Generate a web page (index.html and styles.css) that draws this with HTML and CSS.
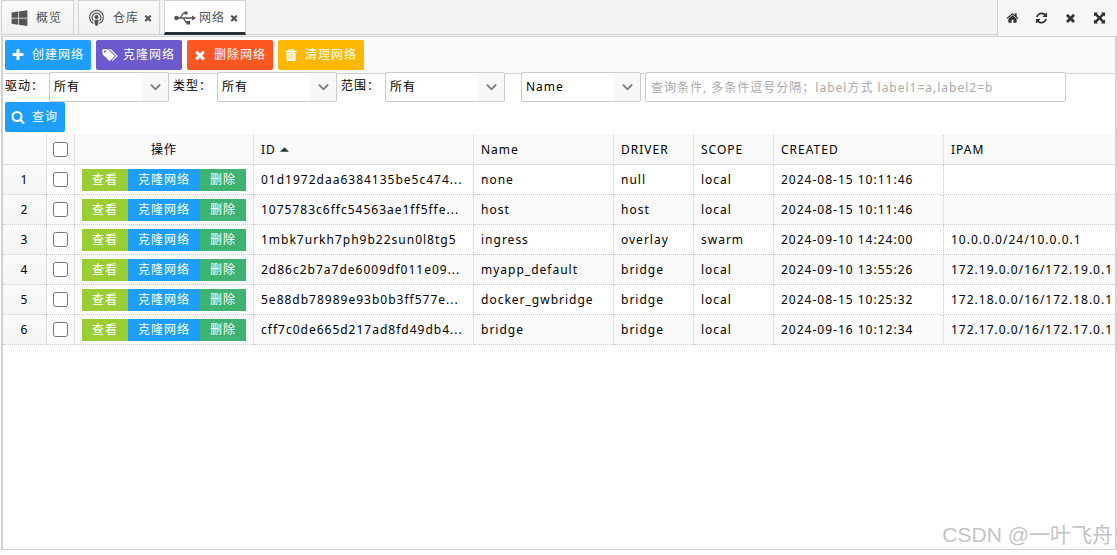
FILE: index.html
```html
<!DOCTYPE html>
<html lang="zh-CN">
<head>
<meta charset="utf-8">
<title>网络</title>
<link rel="stylesheet" href="styles.css">
</head>
<body>
<svg class="defs" aria-hidden="true">
  <symbol id="i-plus" viewBox="0 0 1792 1792"><path d="M1600 736v192q0 40-28 68t-68 28h-416v416q0 40-28 68t-68 28h-192q-40 0-68-28t-28-68v-416h-416q-40 0-68-28t-28-68v-192q0-40 28-68t68-28h416v-416q0-40 28-68t68-28h192q40 0 68 28t28 68v416h416q40 0 68 28t28 68z"/></symbol>
  <symbol id="i-times" viewBox="0 0 1792 1792"><path d="M1490 1322q0 40-28 68l-136 136q-28 28-68 28t-68-28l-294-294-294 294q-28 28-68 28t-68-28l-136-136q-28-28-28-68t28-68l294-294-294-294q-28-28-28-68t28-68l136-136q28-28 68-28t68 28l294 294 294-294q28-28 68-28t68 28l136 136q28 28 28 68t-28 68l-294 294 294 294q28 28 28 68z"/></symbol>
  <symbol id="i-search" viewBox="0 0 1792 1792"><path d="M1216 832q0-185-131.500-316.500t-316.500-131.500-316.500 131.500-131.500 316.500 131.500 316.500 316.500 131.500 316.500-131.500 131.500-316.500zm512 832q0 52-38 90t-90 38q-54 0-90-38l-343-342q-179 124-399 124-143 0-273.500-55.500t-225-150-150-225-55.500-273.500 55.500-273.500 150-225 225-150 273.500-55.500 273.500 55.500 225 150 150 225 55.500 273.500q0 220-124 399l343 343q37 37 37 90z"/></symbol>
  <symbol id="i-home" viewBox="0 0 1792 1792"><path d="M1472 992v480q0 26-19 45t-45 19h-384v-384h-256v384h-384q-26 0-45-19t-19-45v-480q0-1 .5-3t.5-3l575-474 575 474q1 2 1 6zm223-69l-62 74q-8 9-21 11h-3q-13 0-21-7l-692-577-692 577q-12 8-24 7-13-2-21-11l-62-74q-8-10-7-23.500t11-21.500l719-599q32-26 76-26t76 26l244 204v-195q0-14 9-23t23-9h192q14 0 23 9t9 23v408l219 182q10 8 11 21.500t-7 23.500z"/></symbol>
  <symbol id="i-refresh" viewBox="0 0 1792 1792"><path d="M1639 1056q0 5-1 7-64 268-268 434.500t-478 166.500q-146 0-282.500-55t-243.500-157l-129 129q-19 19-45 19t-45-19-19-45v-448q0-26 19-45t45-19h448q26 0 45 19t19 45-19 45l-137 137q71 66 161 102t187 36q134 0 250-65t186-179q11-17 53-117 8-23 30-23h192q13 0 22.500 9.500t9.500 22.500zm25-800v448q0 26-19 45t-45 19h-448q-26 0-45-19t-19-45 19-45l138-138q-148-137-349-137-134 0-250 65t-186 179q-11 17-53 117-8 23-30 23h-199q-13 0-22.500-9.500t-9.500-22.500v-7q65-268 270-434.500t480-166.500q146 0 284 55.500t245 156.500l130-129q19-19 45-19t45 19 19 45z"/></symbol>
  <symbol id="i-windows" viewBox="0 0 1792 1792"><path d="M746 1006v651l-682-94v-557h682zm0-743v659h-682v-565zm982 743v786l-907-125v-661h907zm0-878v794h-907v-669z"/></symbol>
  <symbol id="i-tags" viewBox="0 0 1920 1792"><path d="M448 448q0-53-37.500-90.500t-90.500-37.500-90.500 37.500-37.500 90.500 37.500 90.500 90.500 37.500 90.500-37.500 37.500-90.500zm1067 576q0 53-37 90l-491 492q-39 37-91 37-53 0-90-37l-715-716q-38-37-64.500-101t-26.500-117v-416q0-52 38-90t90-38h416q53 0 117 26.500t102 64.500l715 714q37 39 37 91zm384 0q0 53-37 90l-491 492q-39 37-91 37-36 0-59-14t-53-45l470-470q37-37 37-90 0-52-37-91l-715-714q-38-38-102-64.500t-117-26.500h224q53 0 117 26.500t102 64.500l715 714q37 39 37 91z"/></symbol>
  <symbol id="i-trash" viewBox="0 0 14 14"><path fill-rule="evenodd" d="M5 1h4l1 1.500h2.500v1.500h-11V2.500H4zM5.600 1.800L5.200 2.500h3.600l-.4-.7zM2.500 4.500h9v7.200q0 1.300-1.200 1.300H3.700Q2.500 13 2.500 11.700zM4.700 6v5.500h.6V6zM6.700 6v5.500h.6V6zM8.700 6v5.500h.6V6z"/></symbol>
  <symbol id="i-expand" viewBox="0 0 14 14"><path d="M1 1h4.500L4.200 2.300 7 5.100 9.800 2.300 8.500 1H13v4.500l-1.300-1.300L8.900 7l2.800 2.800L13 8.500V13H8.500l1.300-1.300L7 8.900l-2.800 2.800L5.500 13H1V8.500l1.300 1.300L5.100 7 2.300 4.200 1 5.500z"/></symbol>
  <symbol id="i-podcast" viewBox="0 0 18 18"><g fill="none" stroke="currentColor" stroke-width="1.300"><path d="M5.800 15.300A7.300 7.300 0 1 1 12.200 15.300"/><path d="M5.700 12.300A4.700 4.700 0 1 1 12.300 12.300" /></g><circle cx="9" cy="8.500" r="2.200"/><path d="M6.800 12q0-1 2.200-1t2.200 1q0 2.500-.8 5-.2 1-1.400 1t-1.400-1q-.8-2.500-.8-5z"/></symbol>
  <symbol id="i-usb" viewBox="0 0 22 14"><circle cx="2.500" cy="7" r="2.300"/><circle cx="12" cy="2" r="1.800"/><path d="M12.500 10h3.600v3.600h-3.600zM18 4.400L22 7l-4 2.600z"/><path fill="none" stroke="currentColor" stroke-width="1.300" d="M3 7h16M5.500 7C8 7 7.500 2 10 2h2M8.500 7c2.500 0 2 4.700 4.500 4.700"/></symbol>
  <symbol id="i-down" viewBox="0 0 12 8"><path fill="none" stroke="currentColor" stroke-width="2" d="M1 1.500l5 5 5-5"/></symbol>
  <symbol id="i-up" viewBox="0 0 8 4"><path d="M0 4l4-4 4 4z"/></symbol>
</svg>

<header class="topbar">
  <nav class="tabs">
    <div class="tab first"><svg class="icon tab-icon"><use href="#i-windows"/></svg><a class="tab-link" href="#overview">概览</a></div>
    <div class="tab"><svg class="icon tab-icon"><use href="#i-podcast"/></svg><a class="tab-link" href="#registry">仓库</a><button class="close" type="button" aria-label="关闭仓库"><svg class="icon close-icon"><use href="#i-times"/></svg></button></div>
    <div class="tab active"><svg class="icon usb-icon"><use href="#i-usb"/></svg><a class="tab-link" href="#network">网络</a><button class="close" type="button" aria-label="关闭网络"><svg class="icon close-icon"><use href="#i-times"/></svg></button></div>
  </nav>
  <div class="tools">
    <button class="tool" type="button" aria-label="首页"><svg class="icon"><use href="#i-home"/></svg></button>
    <button class="tool" type="button" aria-label="刷新"><svg class="icon"><use href="#i-refresh"/></svg></button>
    <button class="tool" type="button" aria-label="关闭"><svg class="icon"><use href="#i-times"/></svg></button>
    <button class="tool" type="button" aria-label="全屏"><svg class="icon"><use href="#i-expand"/></svg></button>
  </div>
</header>

<main class="panel">
  <div class="toolbar">
    <button class="btn blue" type="button"><svg class="icon"><use href="#i-plus"/></svg>创建网络</button>
    <button class="btn purple" type="button"><svg class="icon tags-icon"><use href="#i-tags"/></svg>克隆网络</button>
    <button class="btn red" type="button"><svg class="icon"><use href="#i-times"/></svg>删除网络</button>
    <button class="btn amber" type="button"><svg class="icon"><use href="#i-trash"/></svg>清理网络</button>
  </div>

  <form class="filters">
    <div class="field"><label class="label" for="driver">驱动：</label><span class="combo"><select class="select" id="driver"><option>所有</option></select><svg class="arrow"><use href="#i-down"/></svg></span></div>
    <div class="field"><label class="label" for="type">类型：</label><span class="combo"><select class="select" id="type"><option>所有</option></select><svg class="arrow"><use href="#i-down"/></svg></span></div>
    <div class="field"><label class="label" for="scope">范围：</label><span class="combo"><select class="select" id="scope"><option>所有</option></select><svg class="arrow"><use href="#i-down"/></svg></span></div>
    <span class="combo key"><select class="select" aria-label="查询字段"><option>Name</option></select><svg class="arrow"><use href="#i-down"/></svg></span>
    <input class="query" type="text" aria-label="查询条件" placeholder="查询条件, 多条件逗号分隔；label方式 label1=a,label2=b">
    <button class="btn blue" type="button"><svg class="icon"><use href="#i-search"/></svg>查询</button>
  </form>

  <table class="grid">
    <colgroup><col class="c-num"><col class="c-check"><col class="c-ops"><col class="c-id"><col class="c-name"><col class="c-short"><col class="c-short"><col class="c-date"><col></colgroup>
    <thead>
      <tr><th></th><th class="check"><input class="box" type="checkbox" aria-label="全选"></th><th class="center">操作</th><th>ID <svg class="sort"><use href="#i-up"/></svg></th><th>Name</th><th>DRIVER</th><th>SCOPE</th><th>CREATED</th><th>IPAM</th></tr>
    </thead>
    <tbody>
      <tr><td class="num">1</td><td class="check"><input class="box" type="checkbox" aria-label="选择 1"></td><td><div class="ops"><button class="op view" type="button">查看</button><button class="op clone" type="button">克隆网络</button><button class="op del" type="button">删除</button></div></td><td>01d1972daa6384135be5c474...</td><td>none</td><td>null</td><td>local</td><td>2024-08-15 10:11:46</td><td></td></tr>
      <tr><td class="num">2</td><td class="check"><input class="box" type="checkbox" aria-label="选择 2"></td><td><div class="ops"><button class="op view" type="button">查看</button><button class="op clone" type="button">克隆网络</button><button class="op del" type="button">删除</button></div></td><td>1075783c6ffc54563ae1ff5ffe...</td><td>host</td><td>host</td><td>local</td><td>2024-08-15 10:11:46</td><td></td></tr>
      <tr><td class="num">3</td><td class="check"><input class="box" type="checkbox" aria-label="选择 3"></td><td><div class="ops"><button class="op view" type="button">查看</button><button class="op clone" type="button">克隆网络</button><button class="op del" type="button">删除</button></div></td><td>1mbk7urkh7ph9b22sun0l8tg5</td><td>ingress</td><td>overlay</td><td>swarm</td><td>2024-09-10 14:24:00</td><td>10.0.0.0/24/10.0.0.1</td></tr>
      <tr><td class="num">4</td><td class="check"><input class="box" type="checkbox" aria-label="选择 4"></td><td><div class="ops"><button class="op view" type="button">查看</button><button class="op clone" type="button">克隆网络</button><button class="op del" type="button">删除</button></div></td><td>2d86c2b7a7de6009df011e09...</td><td>myapp_default</td><td>bridge</td><td>local</td><td>2024-09-10 13:55:26</td><td>172.19.0.0/16/172.19.0.1</td></tr>
      <tr><td class="num">5</td><td class="check"><input class="box" type="checkbox" aria-label="选择 5"></td><td><div class="ops"><button class="op view" type="button">查看</button><button class="op clone" type="button">克隆网络</button><button class="op del" type="button">删除</button></div></td><td>5e88db78989e93b0b3ff577e...</td><td>docker_gwbridge</td><td>bridge</td><td>local</td><td>2024-08-15 10:25:32</td><td>172.18.0.0/16/172.18.0.1</td></tr>
      <tr><td class="num">6</td><td class="check"><input class="box" type="checkbox" aria-label="选择 6"></td><td><div class="ops"><button class="op view" type="button">查看</button><button class="op clone" type="button">克隆网络</button><button class="op del" type="button">删除</button></div></td><td>cff7c0de665d217ad8fd49db4...</td><td>bridge</td><td>bridge</td><td>local</td><td>2024-09-16 10:12:34</td><td>172.17.0.0/16/172.17.0.1</td></tr>
    </tbody>
  </table>
  <div class="watermark">CSDN @一叶飞舟</div>
</main>
</body>
</html>
```
FILE: styles.css
```css
* {
  box-sizing: border-box;
}

body {
  margin: 0;
  min-height: 100vh;
  padding-bottom: 5px;
  display: flex;
  flex-direction: column;
  background: #fff;
  color: #000;
  font-family: "Noto Sans", "Noto Sans CJK SC", sans-serif;
  font-size: 12px;
  line-height: 18px;
  letter-spacing: 1px;
}

button,
input,
select {
  margin: 0;
  font: inherit;
  letter-spacing: inherit;
  color: inherit;
}

.defs {
  display: none;
}

.icon {
  width: 14px;
  height: 14px;
  flex: none;
  fill: currentColor;
}

.topbar {
  display: flex;
  justify-content: space-between;
  height: 36px;
  padding-left: 1px;
  background: #f3f3f3;
}

.tabs {
  display: flex;
  flex: 1;
  gap: 4px;
  height: 35px;
  border-bottom: 1px solid #d2d2d2;
}

.tab {
  display: flex;
  align-items: center;
  height: 35px;
  padding: 0 6px 0 9px;
  border: 1px solid #d2d2d2;
  background: linear-gradient(#fafafa, #f1f1f1);
  color: #555;
}

.tab.first {
  padding: 0 11px 0 9px;
}

.tab.active {
  padding: 3px 6px 0 9px;
  border-bottom: 3px solid #263238;
  background: #fff;
}

.tab-link {
  margin-left: 8px;
  color: inherit;
  text-decoration: none;
}

.active .tab-link {
  margin-left: 3px;
}

.tab-icon {
  width: 17px;
  height: 17px;
}

.usb-icon {
  width: 22px;
}

.close {
  display: flex;
  margin-left: 4px;
  padding: 0;
  border: 0;
  background: none;
}

.close-icon {
  width: 10px;
  height: 10px;
}

.tools {
  display: flex;
  align-items: center;
  border-left: 1px solid #d2d2d2;
  padding-right: 3px;
  background: #f7f7f7;
  color: #333;
}

.tool {
  display: flex;
  padding: 8px;
  border: 0;
  background: none;
}

.tool .icon {
  width: 13px;
}

.panel {
  position: relative;
  flex: 1;
  border: 2px solid #d2d2d2;
  border-width: 1px 2px 1px 2px;
  margin-left: 1px;
  overflow: hidden;
}

.toolbar {
  display: flex;
  gap: 5px;
  padding: 3px 2px;
  border-bottom: 1px solid #d2d2d2;
  background: #fafafa;
}

.btn {
  display: flex;
  align-items: center;
  gap: 7px;
  height: 30px;
  padding: 0 7px 0 6px;
  border: 0;
  border-radius: 2px;
  color: #fff;
}

.tags-icon {
  width: 16px;
}

.blue {
  background: #1e9fff;
}

.purple {
  gap: 5px;
  background: #6a5acd;
}

.red {
  background: #ff5722;
}

.amber {
  background: #ffb800;
}

.filters {
  display: flex;
  flex-wrap: wrap;
  gap: 0 4px;
  margin-top: -2px;
  padding: 0 2px 3px;
}

.field {
  display: flex;
}

.label {
  width: 44px;
  padding-top: 5px;
}

.combo {
  display: grid;
  grid-template-columns: 92px 28px;
  height: 30px;
}

.key {
  margin-left: 12px;
}

.select {
  grid-area: 1 / 1 / 2 / 3;
  padding: 0 4px;
  border: 1px solid #ccc;
  border-radius: 2px;
  background: linear-gradient(to right, #fff 92px, #f7f7f7 92px);
  appearance: none;
}

.arrow {
  grid-area: 1 / 2;
  place-self: center;
  width: 11px;
  height: 8px;
  color: #777;
  pointer-events: none;
}

.query {
  width: 421px;
  height: 30px;
  padding: 0 5px;
  border: 1px solid #ccc;
  border-radius: 2px;
  background: #fff;
}

.query::placeholder {
  color: #aaa;
}

.grid {
  width: 100%;
  table-layout: fixed;
  border-collapse: separate;
  border-spacing: 0;
}

.c-num {
  width: 44px;
}

.c-check {
  width: 28px;
}

.c-ops {
  width: 179px;
}

.c-id {
  width: 220px;
}

.c-name {
  width: 140px;
}

.c-short {
  width: 80px;
}

.c-date {
  width: 170px;
}

.grid th,
.grid td {
  height: 30px;
  padding: 0 0 0 7px;
  border-right: 1px dotted #ccc;
  border-bottom: 1px dotted #ccc;
  font-weight: 400;
  text-align: left;
  white-space: nowrap;
}

.grid th {
  border-bottom: 1px solid #ddd;
  background: #fafafa;
}

.grid th:last-child,
.grid td:last-child {
  border-right: 0;
}

.grid tbody tr:nth-child(even) {
  background: #fafafa;
}

.grid .num {
  padding: 0;
  background: linear-gradient(#fafafa, #f5f5f5);
  text-align: center;
}

.grid .center {
  padding: 0;
  text-align: center;
}

.grid .check {
  padding: 0;
  text-align: center;
}

.box {
  display: block;
  width: 15px;
  height: 15px;
  margin: 0 auto;
}

.sort {
  width: 9px;
  height: 5px;
  margin-bottom: 2px;
  fill: #333;
}

.ops {
  display: flex;
}

.op {
  height: 22px;
  padding: 0 10px;
  border: 0;
  color: #fff;
  line-height: 22px;
}

.view {
  background: #9acd32;
}

.clone {
  background: #1e9fff;
}

.del {
  background: #3cb371;
}

.watermark {
  position: absolute;
  right: 2px;
  bottom: 1px;
  color: #c4c4c4;
  font-family: "Liberation Sans", "Noto Sans CJK SC", sans-serif;
  font-size: 21px;
  line-height: 26px;
  letter-spacing: 0;
}
```
